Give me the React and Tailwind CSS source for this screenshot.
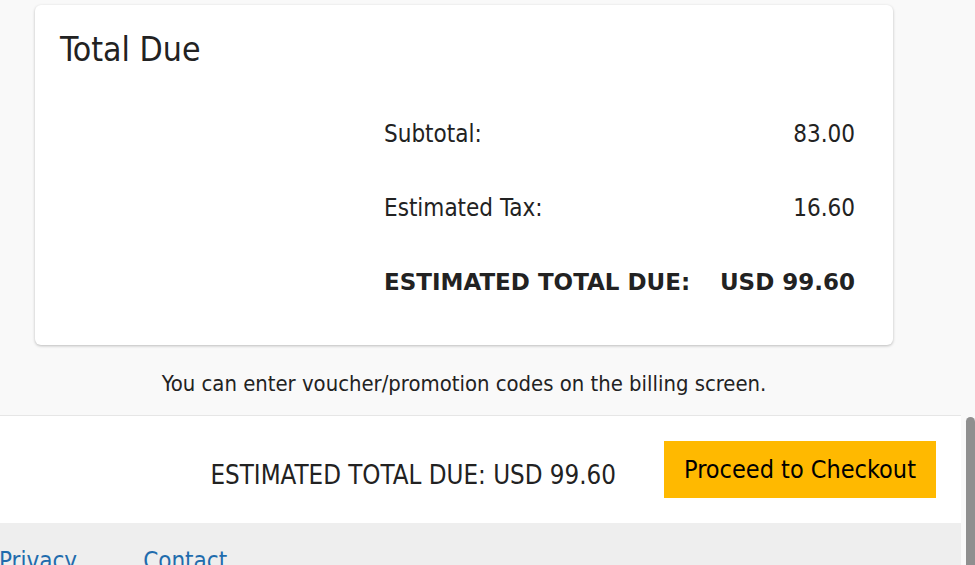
export default function App() {
  const font = { fontFamily: '"DejaVu Sans Condensed", "DejaVu Sans", sans-serif' };
  const wide = { fontFamily: '"DejaVu Sans", sans-serif' };
  return (
    <div className="flex h-[565px] w-[975px] overflow-hidden bg-[#f9f9f9] text-[#222]" style={font}>
      <div className="flex w-[961px] flex-col">
        <div className="h-[415px] shrink-0 pl-[35px] pt-[5px]">
          <div className="flex h-[340px] w-[858px] flex-col rounded-[6px] bg-white px-[25px] pt-[25px] shadow-[0_1px_3px_rgba(0,0,0,0.25)]">
            <h2 className="text-[33.6px] leading-[40px] text-[#222]">Total Due</h2>
            <div className="ml-[324px] mt-[52px] flex flex-col gap-[49px] pr-[13px] text-[24px] leading-[25px]">
              <div className="flex justify-between">
                <span>Subtotal:</span>
                <span>83.00</span>
              </div>
              <div className="flex justify-between">
                <span>Estimated Tax:</span>
                <span>16.60</span>
              </div>
              <div className="flex justify-between text-[23px] font-bold" style={wide}>
                <span>ESTIMATED TOTAL DUE:</span>
                <span>USD 99.60</span>
              </div>
            </div>
          </div>
          <p className="mt-[26px] w-[858px] text-center text-[21.9px] leading-[25px]">
            You can enter voucher/promotion codes on the billing screen.
          </p>
        </div>
        <div className="flex h-[108px] shrink-0 items-center justify-end gap-[48px] border-t border-[#e6e6e6] bg-white pr-[25px]">
          <span className="mt-[12px] text-[25.7px] text-[#222]">ESTIMATED TOTAL DUE: USD 99.60</span>
          <button className="flex h-[57px] w-[272px] items-center justify-center bg-[#ffb900] text-[25px] text-black">
            Proceed to Checkout
          </button>
        </div>
        <div className="flex flex-1 gap-[66px] bg-[#eeeeee] pt-[20px] text-[24px] text-[#1f6cad]">
          <a className="-ml-[1px]">Privacy</a>
          <a>Contact</a>
        </div>
      </div>
      <div className="flex w-[14px] flex-col bg-[#f9f9f9] pt-[417px] pl-[5px]">
        <div className="flex-1 rounded-t-[5px] bg-[#8f8f8f]" />
      </div>
    </div>
  );
}
